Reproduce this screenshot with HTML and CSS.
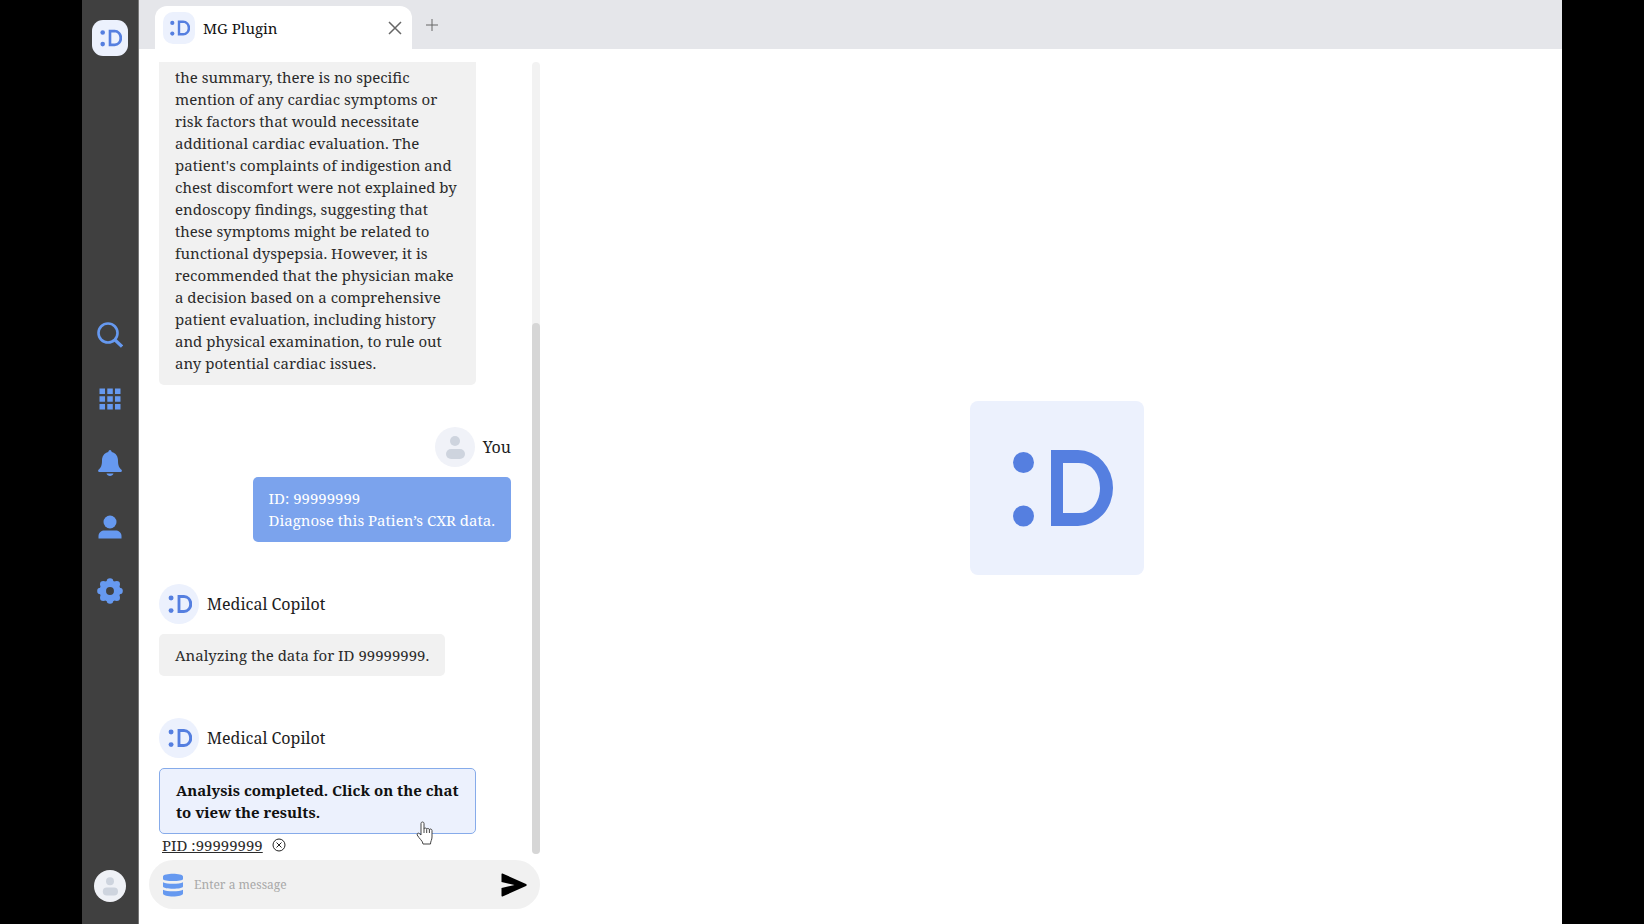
FILE: index.html
```html
<!DOCTYPE html>
<html lang="en">
<head>
<meta charset="utf-8">
<title>MG Plugin</title>
<link rel="stylesheet" href="styles.css">
</head>
<body>
<svg class="defs" aria-hidden="true">
  <symbol id="logo" viewBox="0 0 174 174">
    <circle cx="53.500" cy="61.500" r="10.500"/><circle cx="53.500" cy="115" r="10.500"/>
    <path fill-rule="evenodd" d="M81 49h27a35 38 0 0 1 0 76H81zM93 62v50h16c28 0 28-50 0-50z"/>
  </symbol>
  <symbol id="person" viewBox="0 0 40 40">
    <circle cx="20" cy="14" r="5"/><rect x="11" y="22" width="19" height="10" rx="5"/>
  </symbol>
</svg>
<div class="app">
  <nav class="sidebar" aria-label="Main">
    <a class="brand" href="#" aria-label="Home"><svg viewBox="32 32 110 110"><use href="#logo" width="174" height="174"/></svg></a>
    <div class="menu">
      <button class="menu-item" aria-label="Search"><svg viewBox="0 0 26 26"><circle cx="11" cy="11" r="9.500" fill="none" stroke="currentColor" stroke-width="2.600"/><path d="M18 18l7 6.500" stroke="currentColor" stroke-width="3.200"/></svg></button>
      <button class="menu-item" aria-label="Apps"><svg viewBox="0 0 26 26"><path d="M2.500 2.500h5.500v5.500h-5.500zM10.300 2.500h5.500v5.500h-5.500zM18 2.500h5.500v5.500H18zM2.500 10.300h5.500v5.500h-5.500zM10.300 10.300h5.500v5.500h-5.500zM18 10.300h5.500v5.500H18zM2.500 18h5.500v5.500h-5.500zM10.300 18h5.500v5.500h-5.500zM18 18h5.500v5.500H18z"/></svg></button>
      <button class="menu-item" aria-label="Notifications"><svg viewBox="0 0 26 26"><path d="M13 0c1 0 1.600 1 1.700 2C19 3 21 6.500 21 10.500c0 5 1 7 3.500 9.300.8.900.3 2.200-.9 2.200H2.400c-1.200 0-1.700-1.300-.9-2.200C4 17.500 5 15.500 5 10.500 5 6.500 7 3 11.300 2c.1-1 .7-2 1.700-2zM9.500 23.500h7c-.7 3.200-6.300 3.200-7 0z"/></svg></button>
      <button class="menu-item" aria-label="Profile"><svg viewBox="0 0 26 26"><circle cx="13" cy="8" r="6.500"/><path d="M1.500 24.500V22c0-3.500 3-5.500 6-5.500h11c3 0 6 2 6 5.500v2.500z"/></svg></button>
      <button class="menu-item" aria-label="Settings"><svg viewBox="0 0 26 26"><circle cx="13" cy="13" r="7.200" fill="none" stroke="currentColor" stroke-width="6.500"/><circle cx="13" cy="3.500" r="3.300"/><circle cx="13" cy="22.500" r="3.300"/><circle cx="3.500" cy="13" r="3.300"/><circle cx="22.500" cy="13" r="3.300"/><circle cx="6.300" cy="6.300" r="3.300"/><circle cx="19.700" cy="6.300" r="3.300"/><circle cx="6.300" cy="19.700" r="3.300"/><circle cx="19.700" cy="19.700" r="3.300"/></svg></button>
    </div>
    <button class="account" aria-label="Account"><svg viewBox="0 0 40 40"><use href="#person"/></svg></button>
  </nav>
  <main class="main">
    <header class="tabs">
      <div class="tab">
        <span class="tab-logo"><svg viewBox="32 32 110 110"><use href="#logo" width="174" height="174"/></svg></span>
        <span class="tab-title">MG Plugin</span>
        <button class="tab-close" aria-label="Close tab"><svg viewBox="0 0 14 14"><path d="M1 1l12 12M13 1L1 13"/></svg></button>
      </div>
      <button class="tab-add" aria-label="New tab"><svg viewBox="0 0 12 12"><path d="M6 0v12M0 6h12"/></svg></button>
    </header>
    <div class="content">
      <section class="chat">
        <div class="thread">
          <div class="messages">
            <p class="bubble bubble-cut">the summary, there is no specific<br>mention of any cardiac symptoms or<br>risk factors that would necessitate<br>additional cardiac evaluation. The<br>patient's complaints of indigestion and<br>chest discomfort were not explained by<br>endoscopy findings, suggesting that<br>these symptoms might be related to<br>functional dyspepsia. However, it is<br>recommended that the physician make<br>a decision based on a comprehensive<br>patient evaluation, including history<br>and physical examination, to rule out<br>any potential cardiac issues.</p>
            <article class="message mine">
              <div class="author"><span class="avatar avatar-user"><svg viewBox="0 0 40 40"><use href="#person"/></svg></span>You</div>
              <p class="bubble">ID: 99999999<br>Diagnose this Patien’s CXR data.</p>
            </article>
            <article class="message">
              <div class="author"><span class="avatar"><svg viewBox="32 32 110 110"><use href="#logo" width="174" height="174"/></svg></span>Medical Copilot</div>
              <p class="bubble">Analyzing the data for ID 99999999.</p>
            </article>
            <article class="message">
              <div class="author"><span class="avatar"><svg viewBox="32 32 110 110"><use href="#logo" width="174" height="174"/></svg></span>Medical Copilot</div>
              <button class="bubble result">Analysis completed. Click on the chat<br>to view the results.
                <svg class="pointer" viewBox="0 0 18 24"><path d="M5 14V2.500C5 .5 8 .5 8 2.500V8c0-1.300 2.700-1.300 2.700.3 0-1.300 2.700-1.100 2.700.5 0-1.200 2.600-1.100 2.600.7V16c0 3-1.500 4-1.500 7H7c0-3-4-5.500-5.800-9C.6 12.200 2.600 11.600 3.500 12.700zM8 8v4M10.700 8.500v3.500M13.400 9v3"/></svg>
              </button>
              <div class="pid"><a class="pid-link" href="#">PID :99999999</a>
                <button class="pid-remove" aria-label="Remove patient"><svg viewBox="0 0 14 14"><circle cx="7" cy="7" r="6"/><path d="M4.500 4.500l5 5M9.500 4.500l-5 5"/></svg></button>
              </div>
            </article>
          </div>
          <div class="scrollbar"><div class="scrollbar-thumb"></div></div>
        </div>
        <form class="composer">
          <svg class="database" viewBox="0 0 22 24"><path d="M1 3.500C1 -.3 21 -.3 21 3.500V6c0 2.800-20 2.800-20 0zM1 9.300c4 2 16 2 20 0v4.200c0 3-20 3-20 0zM1 16.800c4 2 16 2 20 0v3.700c0 4-20 4-20 0z"/></svg>
          <input class="composer-input" type="text" placeholder="Enter a message" aria-label="Enter a message">
          <button class="send" aria-label="Send"><svg viewBox="0 0 26 24"><path d="M1.500.5L25 11c1 .5 1 1.500 0 2L1.500 23.500C.8 23.700.5 23.400.5 22.800V15l13-3-13-3V1.200c0-.6.300-.9 1-.7z"/></svg></button>
        </form>
      </section>
      <section class="viewer">
        <div class="viewer-logo"><svg viewBox="0 0 174 174"><use href="#logo" width="174" height="174"/></svg></div>
      </section>
    </div>
  </main>
</div>
</body>
</html>
```

FILE: styles.css
```css
* { box-sizing: border-box; }
body {
  margin: 0;
  background: #000;
  color: #2b2b2b;
  font: 15px/22px "Noto Serif", "DejaVu Serif", serif;
}
button {
  padding: 0;
  border: 0;
  background: none;
  color: inherit;
  font: inherit;
}
svg { display: block; }
p { margin: 0; }
.defs { display: none; }

.app {
  display: flex;
  height: 100vh;
  margin: 0 82px;
  background: #fff;
}

.sidebar {
  display: flex;
  flex: none;
  flex-direction: column;
  align-items: center;
  justify-content: space-between;
  width: 57px;
  padding: 20px 0 22px;
  background: #404040;
  border-right: 1px solid #777;
}
.brand {
  width: 36px;
  height: 36px;
  border-radius: 11px;
  background: #ecf1fd;
  fill: #557fe0;
}
.brand svg { width: 36px; padding: 6px; }
.menu {
  display: flex;
  flex-direction: column;
  gap: 38px;
}
.menu-item { color: #6699f0; }
.menu-item svg {
  width: 26px;
  height: 26px;
  fill: currentColor;
}
.account {
  width: 32px;
  border-radius: 50%;
  background: #eff1f6;
  fill: #ced4de;
}

.main {
  display: flex;
  flex: 1;
  flex-direction: column;
  min-width: 0;
}
.tabs {
  display: flex;
  flex: none;
  height: 49px;
  padding: 6px 16px 0;
  background: #e5e6ea;
}
.tab {
  display: flex;
  align-items: center;
  width: 257px;
  padding: 0 10px 0 8px;
  border-radius: 12px 12px 0 0;
  background: #fff;
  color: #111;
}
.tab-logo {
  width: 32px;
  height: 32px;
  padding: 5px;
  border-radius: 10px;
  background: #ecf1fd;
  fill: #557fe0;
}
.tab-title {
  flex: 1;
  margin-left: 8px;
}
.tab svg { width: 100%; }
.tab .tab-close {
  width: 14px;
  stroke-width: 1.5;
}
.tab-close, .tab-add {
  fill: none;
  stroke: #666;
}
.tab-add {
  align-self: flex-start;
  width: 12px;
  margin: 13px 0 0 14px;
}

.content {
  display: flex;
  flex: 1;
  min-height: 0;
}
.chat {
  display: flex;
  flex: none;
  flex-direction: column;
  width: 412px;
  padding: 13px 11px 12px 10px;
}
.thread {
  display: flex;
  flex: 1;
  justify-content: space-between;
  min-height: 0;
  overflow: hidden;
}
.messages {
  display: flex;
  flex-direction: column;
  align-items: flex-start;
  gap: 42px;
  width: 362px;
  padding-left: 10px;
}
.message {
  display: flex;
  flex-direction: column;
  align-items: flex-start;
  gap: 10px;
}
.mine {
  align-self: flex-end;
  align-items: flex-end;
}
.author {
  display: flex;
  align-items: center;
  gap: 8px;
  color: #1c1c1c;
  font-size: 16px;
}
.avatar {
  width: 40px;
  height: 40px;
  padding: 7px;
  border-radius: 50%;
  background: #ecf1fd;
  fill: #557fe0;
}
.avatar-user {
  padding: 0;
  background: #f0f2f8;
  fill: #ced4de;
}
.bubble {
  padding: 10px 16px;
  border-radius: 5px;
  background: #f1f1f1;
  white-space: nowrap;
}
.bubble-cut {
  width: 317px;
  padding: 4px 16px 11px;
  border-radius: 0 0 5px 5px;
}
.mine .bubble {
  padding-bottom: 11px;
  background: #7ba3ed;
  color: #fff;
}
.result {
  position: relative;
  width: 317px;
  border: 1px solid #86abea;
  background: #ecf1fd;
  color: #111;
  font-weight: 700;
  text-align: left;
}
.pointer {
  position: absolute;
  right: 41px;
  bottom: -12px;
  width: 18px;
  height: 24px;
  fill: #fff;
  stroke: #444;
}
.pid {
  display: flex;
  align-items: center;
  gap: 9px;
  margin-top: -10px;
  padding-left: 3px;
}
.pid-link {
  color: #2b2b2b;
  text-decoration: underline;
}
.pid-remove {
  width: 14px;
  fill: none;
  stroke: #222;
}
.scrollbar {
  display: flex;
  flex-direction: column;
  justify-content: flex-end;
  width: 8px;
  margin-bottom: 3px;
  border-radius: 4px;
  background: #f2f2f2;
}
.scrollbar-thumb {
  height: 67%;
  border-radius: 4px;
  background: #d6d6d6;
}
.composer {
  display: flex;
  flex: none;
  align-items: center;
  gap: 10px;
  height: 49px;
  margin: 3px 0;
  padding: 0 13px;
  border-radius: 25px;
  background: #f1f1f1;
}
.database {
  width: 22px;
  fill: #6699f0;
}
.composer-input {
  flex: 1;
  min-width: 0;
  padding: 0;
  border: 0;
  outline: 0;
  background: none;
  color: #2b2b2b;
  font: inherit;
  font-size: 12px;
}
.composer-input::placeholder {
  color: #a8a8a8;
  opacity: 1;
}
.send { width: 26px; }

.viewer {
  display: flex;
  flex: 1;
  align-items: center;
  justify-content: center;
  padding-top: 3px;
}
.viewer-logo {
  width: 174px;
  border-radius: 8px;
  background: #ecf1fd;
  fill: #557fe0;
}
```
